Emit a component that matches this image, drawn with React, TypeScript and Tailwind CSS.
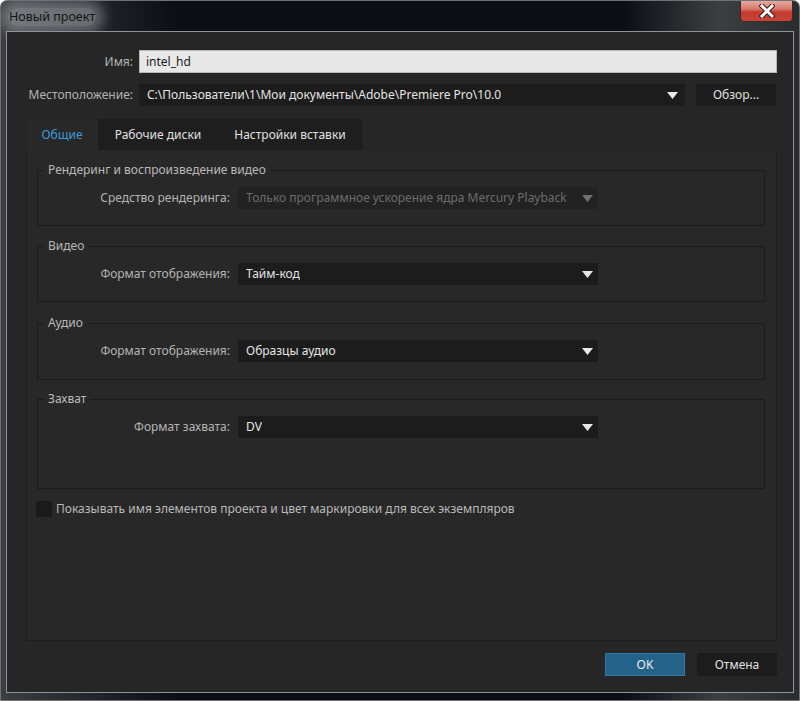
import React from 'react';

const font = 'font-["Segoe_UI","Noto_Sans","Open_Sans",sans-serif]';

const Caret: React.FC<{ dim?: boolean }> = ({ dim }) => (
  <svg width="11" height="7" viewBox="0 0 11 7" className="shrink-0">
    <path d="M0 0 H11 L5.5 7 Z" fill={dim ? '#707070' : '#e8e8e8'} />
  </svg>
);

const Select: React.FC<{ value: string; dim?: boolean; className?: string }> = ({ value, dim, className }) => (
  <div
    className={`h-[22px] flex items-center justify-between pl-[8px] pr-[5px] ${dim ? 'bg-[#222222] text-[#6c6c6c]' : 'bg-[#1c1c1c] text-[#e4e4e4]'} ${className ?? ''}`}
  >
    <span className="truncate">{value}</span>
    <Caret dim={dim} />
  </div>
);

const Group: React.FC<{ title: string; label: string; value: string; dim?: boolean; pb: string }> = ({
  title,
  label,
  value,
  dim,
  pb,
}) => (
  <fieldset className={`border border-[#1b1b1b] ${pb}`}>
    <legend className="ml-[6px] px-[4px] h-[18px] leading-[18px] text-[#b9b9b9]">{title}</legend>
    <div className="flex items-center pt-[8px]">
      <div className="w-[200px] text-right pr-[8px] text-[#b4b4b4]">{label}</div>
      <Select value={value} dim={dim} className="w-[360px]" />
    </div>
  </fieldset>
);

export default function App() {
  return (
    <div
      className={`${font} text-[12px] w-[800px] h-[701px] overflow-hidden rounded-t-[7px] border border-[#6d7176] bg-[linear-gradient(90deg,#3b3e41_0%,#0b0f14_22%,#0b0f14_78%,#3c3f42_90%,#2a2d30_100%)] flex flex-col`}
    >
      {/* title bar */}
      <div className="h-[30px] shrink-0 flex items-start justify-between">
        <div className="pl-[7px] pt-[7px]">
          <span className="inline-block px-[1px] h-[18px] leading-[18px] text-[12.5px] text-[#151515] bg-[rgba(190,196,202,0.45)] rounded-[9px] shadow-[0_0_12px_8px_rgba(190,196,202,0.4)]">
            Новый проект
          </span>
        </div>
        <div className="mr-[6px] -mt-px w-[53px] h-[22px] rounded-b-[4px] border border-[#4a2420] bg-[linear-gradient(180deg,#e3aa9f_0%,#d7796c_40%,#c43a2c_55%,#c2453a_100%)] flex items-center justify-center">
          <svg width="16" height="14" viewBox="0 0 16 14">
            <path d="M3 2 L13 12 M13 2 L3 12" stroke="#3a1a16" strokeWidth="5" strokeLinecap="square" />
            <path d="M3 2 L13 12 M13 2 L3 12" stroke="#ffffff" strokeWidth="3" strokeLinecap="square" />
          </svg>
        </div>
      </div>

      {/* content */}
      <div className="flex-1 mx-[5px] mb-[7px] border border-[#8f9398] bg-[#262626] flex flex-col pl-[19px] pr-[16px] pt-[18px] pb-[15px]">
        <div className="flex items-center h-[23px]">
          <div className="w-[113px] text-right pr-[6px] text-[#b4b4b4]">Имя:</div>
          <div className="flex-1 h-[23px] bg-[#e8e8e8] border border-[#b8b8b8] flex items-center pl-[6px] text-[#1a1a1a]">
            intel_hd
          </div>
        </div>

        <div className="flex items-center h-[22px] mt-[11px]">
          <div className="w-[113px] text-right pr-[6px] text-[#b4b4b4] whitespace-nowrap">Местоположение:</div>
          <Select value={'C:\\Пользователи\\1\\Мои документы\\Adobe\\Premiere Pro\\10.0'} className="w-[546px] pr-[7px]" />
          <div className="ml-[11px] w-[80px] h-[22px] bg-[#1c1c1c] text-[#e0e0e0] flex items-center justify-center">
            Обзор...
          </div>
        </div>

        {/* tabs */}
        <div className="flex mt-[13px] h-[31px]">
          <div className="w-[72px] bg-[#282828] text-[#3a9ad9] flex items-center justify-center">Общие</div>
          <div className="w-[120px] bg-[#1e1e1e] text-[#e0e0e0] flex items-center justify-center">Рабочие диски</div>
          <div className="w-[144px] bg-[#1e1e1e] text-[#e0e0e0] flex items-center justify-center">Настройки вставки</div>
        </div>

        <div className="h-[491px] bg-[#282828] border border-[#1e1e1e] border-t-0 pl-[10px] pr-[11px] pt-[11px] flex flex-col">
          <Group
            title="Рендеринг и воспроизведение видео"
            label="Средство рендеринга:"
            value="Только программное ускорение ядра Mercury Playback"
            dim
            pb="pb-[16px]"
          />
          <div className="mt-[11px]">
            <Group title="Видео" label="Формат отображения:" value="Тайм-код" pb="pb-[16px]" />
          </div>
          <div className="mt-[12px]">
            <Group title="Аудио" label="Формат отображения:" value="Образцы аудио" pb="pb-[17px]" />
          </div>
          <div className="mt-[10px]">
            <Group title="Захват" label="Формат захвата:" value="DV" pb="pb-[50px]" />
          </div>
          <div className="flex items-center mt-[12px] h-[16px]">
            <div className="w-[16px] h-[16px] bg-[#1a1a1a] -ml-px" />
            <span className="ml-[4px] text-[#b9b9b9] whitespace-nowrap">
              Показывать имя элементов проекта и цвет маркировки для всех экземпляров
            </span>
          </div>
        </div>

        <div className="flex justify-end mt-[12px] gap-[12px]">
          <div className="w-[80px] h-[23px] bg-[#25628a] border border-[#2f79a8] text-[#e8eef2] flex items-center justify-center">
            OK
          </div>
          <div className="w-[80px] h-[23px] bg-[#1c1c1c] text-[#e0e0e0] flex items-center justify-center">
            Отмена
          </div>
        </div>
      </div>
    </div>
  );
}
